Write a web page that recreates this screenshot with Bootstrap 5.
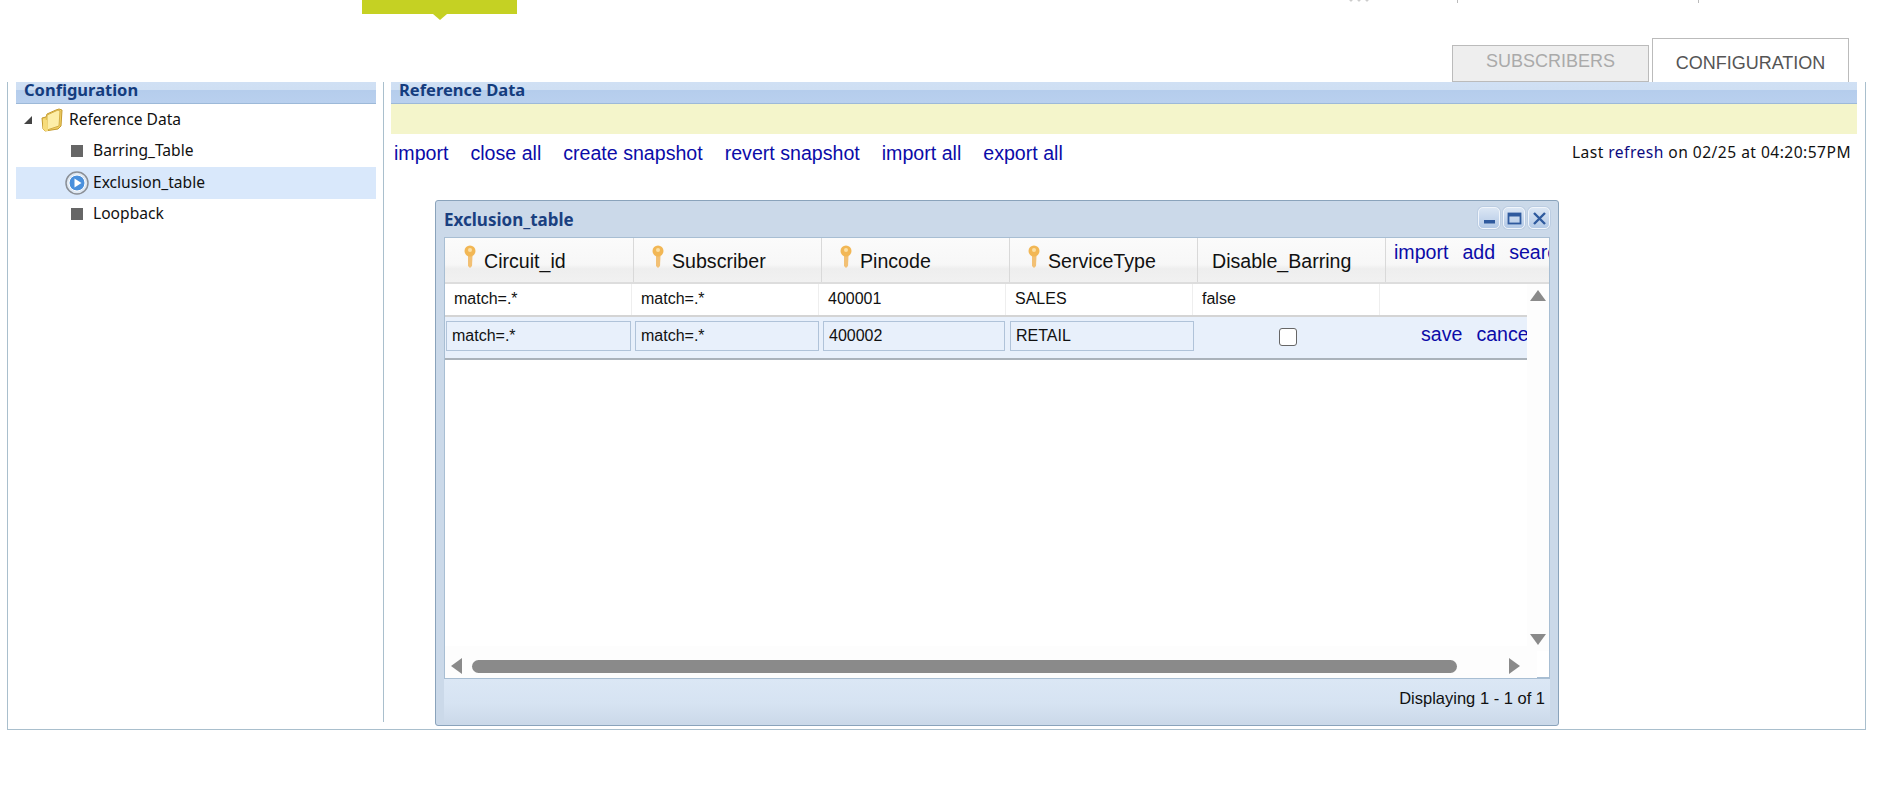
<!DOCTYPE html>
<html lang="en">
<head>
<meta charset="utf-8">
<title>Exclusion_table</title>
<link rel="stylesheet" href="https://cdn.jsdelivr.net/npm/bootstrap@5.3.0/dist/css/bootstrap.min.css">
<style>
html,body{height:789px;overflow:hidden;background:#fff}
body{font-family:"Liberation Sans",Arial,sans-serif;color:#111}
a{text-decoration:none;color:#0b0ba8}
.topzone{height:82px}
.brandtab{position:relative;width:155px;height:14px;margin-left:362px;background:#c5d123}
.brandtab::after{content:"";position:absolute;left:71px;top:14px;border:7px solid transparent;border-top:6px solid #c5d123;border-bottom:0}
.topfrag{position:absolute;top:0;width:1px;height:3px;background:#bbb}
.topfrag.f1{left:1457px}.topfrag.f2{left:1698px}
.topdots{position:absolute;top:0;left:1347px;width:24px;height:2px;background:radial-gradient(circle,#ccc 1px,transparent 2px) 0 -2px/8px 4px}
.tabset{position:absolute;top:38px;right:39px;gap:3px;align-items:flex-end}
.tabitem{font-size:18px;border:1px solid #bbb;border-bottom:0;text-align:center}
.tabitem.off{width:197px;height:37px;line-height:31px;background:#eee;color:#aaa;border-bottom:1px solid #bbb}
.tabitem.on{width:197px;height:44px;line-height:48px;background:#fff;color:#555}
.frame{margin-left:7px;width:1859px;height:648px;border:1px solid #a9bfcd;border-top:0}
.treepane{width:376px;height:640px;padding-left:8px;border-right:1px solid #a9bfcd;flex:none}
.panehead{height:22px;padding-left:8px;font:700 16.5px/16px "Noto Sans",sans-serif;color:#143c7e;background:linear-gradient(#d0e0f4 0,#cfdff3 38%,#b5cdec 40%,#b9d0ee 100%);border-bottom:1px solid #9db9d8}
.treepane .panehead{width:360px}
.treelist{font:15.6px/1 "Noto Sans",sans-serif;color:#111;width:360px}
.treerow{height:31.5px;gap:4px}
.treerow.lvl2{padding-left:55px;gap:10px}
.treerow.sel{background:#d9e8fb;padding-left:49px;gap:4px}
.treerow.first{padding-left:7px;gap:5px}
.treerow.first .me-1{margin-right:2px!important}
.mainpane{padding:0 8px 0 7px;width:1482px}
.noticebar{height:30px;background:#f4f5cb}
.actionrow{height:66px;padding:6px 6px 0 3px}
.actionlinks{gap:22px;font-size:19.6px;line-height:26px}
.refreshinfo{font:15.6px/24px "Noto Sans",sans-serif;color:#111;letter-spacing:.46px}
.refreshinfo a{color:#0b0b80}
.winbox{margin-left:44px;width:1124px;height:526px;background:#cbd9e9;border:1px solid #8aa3bb;border-radius:3px;padding:0 8px}
.wintitle{height:36px;padding-top:1px;font:700 17px/1 "Noto Sans",sans-serif;color:#1a4080}
.wbtns{gap:3px;margin-top:-3px}
.wbtn{width:22px;height:22px;border:1px solid #f0f5fb;border-radius:5px;background:linear-gradient(#dbe6f4,#b3c9e6);box-shadow:0 0 0 1px #bccde2}
.gridbox{width:1106px;height:442px;background:#fff;border:1px solid #a8bed3;border-bottom-width:2px;border-right-width:1px}
.gridhead{height:46px;width:1104px;padding-left:1px;overflow:hidden;background:linear-gradient(#fbfbfb 0,#f7f7f7 60%,#eeeeee 70%,#f1f1f1 100%);border-bottom:2px solid #ddd}
.headcell{width:188px;flex:none;border-right:1px solid #d9d9d9;font-size:19.6px;padding:5px 0 0 17px;height:44px;line-height:36px;gap:7px}
.headcell .keyico{margin-top:2px;flex:none}
.headcell.nokey{padding-left:14px}
.headlinks{gap:14px;font-size:19.6px;line-height:26px;padding:1px 0 0 8px;white-space:nowrap}
.gridmain{height:394px;position:relative}
.gridrows{width:1082px;overflow:hidden}
.datarow{height:33px;font-size:16px;border-bottom:2px solid #d4d4d4;line-height:29px}
.datacell{width:187px;flex:none;padding-left:9px;border-right:1px solid #eee;height:31px}
.editrow{height:43px;background:#e8f0fb;border-bottom:2px solid #aab2ba;padding:4px 0 0 1px;gap:4px}
.cellinput.form-control{width:184px;height:30px;flex:none;padding:0 5px;border:1px solid #b0c3d9;border-radius:0;background:#e8f0fb;font-size:16px;color:#111;line-height:1}
.cellinput.wide.form-control{width:185px}
.cellinput.slim.form-control{width:182px;margin-right:1px}
.cellcheck{width:187px;flex:none;height:30px;padding-top:1px}
.cellcheck .form-check-input{width:18px;height:18px;margin:6px 0 0 -8px;border:1px solid #666;background-color:#fff;border-radius:3px}
.editlinks{gap:14px;font-size:19.6px;line-height:26px;padding-left:32px;white-space:nowrap}
.vtrack{position:absolute;right:0;top:0;width:22px;height:367px;background:#fdfdfd}
.htrack{position:absolute;left:0;bottom:0;width:1092px;height:32px;background:#fdfdfd}
.arrowup,.arrowdn{position:absolute;left:3px;width:0;height:0;border:8px solid transparent}
.arrowup{top:6px;border-bottom:11px solid #8a8a8a;border-top:0}
.arrowdn{top:350px;border-top:11px solid #8a8a8a;border-bottom:0}
.arrowlf,.arrowrt{position:absolute;top:12px;width:0;height:0;border:8px solid transparent}
.arrowlf{left:6px;border-right:11px solid #8a8a8a;border-left:0}
.arrowrt{left:1064px;border-left:11px solid #8a8a8a;border-right:0}
.hthumb{position:absolute;left:27px;top:14px;width:985px;height:13px;border-radius:7px;background:#8a8a8a}
.winfoot{height:45px;padding:0 5px 7px 0;background:linear-gradient(#dbe7f5 0,#d6e3f2 55%,#cbd9e9 100%);font-size:16.5px;color:#111}
</style>
</head>
<body>
<div class="topzone position-relative">
  <div class="brandtab"></div>
  <span class="topdots"></span><span class="topfrag f1"></span><span class="topfrag f2"></span>
  <div class="tabset position-absolute d-flex">
    <div class="tabitem off">SUBSCRIBERS</div>
    <div class="tabitem on">CONFIGURATION</div>
  </div>
</div>
<div class="frame d-flex">
  <div class="treepane">
    <div class="panehead">Configuration</div>
    <div class="treelist">
      <div class="treerow first d-flex align-items-center">
        <svg width="10" height="10" viewBox="0 0 10 10" class="me-1"><path d="M9 1V9H1Z" fill="#444"/></svg>
        <svg width="24" height="24" viewBox="0 0 24 24"><path d="M2 10l4-1 1-3 9-4 3-1 3 1-1 16-3 3L5 23 3 21Z" fill="#f0cf63" stroke="#c49a2e"/><path d="M7 7l11-5 2 1-1 15-12 4Z" fill="#fdeea8" stroke="#d4ae45"/><path d="M3 11l4 1 1 11-3 0-2-2Z" fill="#f7dc7c"/></svg>
        <span>Reference Data</span>
      </div>
      <div class="treerow lvl2 d-flex align-items-center">
        <svg width="12" height="12" viewBox="0 0 12 12"><rect width="12" height="12" fill="#666"/></svg>
        <span>Barring_Table</span>
      </div>
      <div class="treerow sel d-flex align-items-center">
        <svg width="24" height="24" viewBox="0 0 24 24"><circle cx="12" cy="12" r="11" fill="#dfe8f2" stroke="#8a8f96" stroke-width="1.500"/><circle cx="12" cy="12" r="8" fill="#4a90dc" stroke="#fff" stroke-width="1"/><path d="M9.500 7.500l7 4.500-7 4.500Z" fill="#fff"/></svg>
        <span>Exclusion_table</span>
      </div>
      <div class="treerow lvl2 d-flex align-items-center">
        <svg width="12" height="12" viewBox="0 0 12 12"><rect width="12" height="12" fill="#666"/></svg>
        <span>Loopback</span>
      </div>
    </div>
  </div>
  <div class="mainpane">
    <div class="panehead">Reference Data</div>
    <div class="noticebar"></div>
    <div class="actionrow d-flex justify-content-between align-items-start">
      <div class="actionlinks d-flex"><a href="#">import</a><a href="#">close all</a><a href="#">create snapshot</a><a href="#">revert snapshot</a><a href="#">import all</a><a href="#">export all</a></div>
      <div class="refreshinfo">Last <a href="#">refresh</a> on 02/25 at 04:20:57PM</div>
    </div>
    <div class="winbox">
      <div class="wintitle d-flex justify-content-between align-items-center">
        <span>Exclusion_table</span>
        <div class="wbtns d-flex">
          <div class="wbtn d-flex align-items-center justify-content-center"><svg width="15" height="15" viewBox="0 0 15 15"><rect x="2" y="9" width="11" height="3.500" fill="#2f5a9e"/></svg></div>
          <div class="wbtn d-flex align-items-center justify-content-center"><svg width="15" height="15" viewBox="0 0 15 15"><rect x="1.500" y="2.500" width="12" height="10" fill="none" stroke="#2f5a9e" stroke-width="1.800"/><rect x="1" y="2" width="13" height="3.500" fill="#2f5a9e"/></svg></div>
          <div class="wbtn d-flex align-items-center justify-content-center"><svg width="15" height="15" viewBox="0 0 15 15"><path d="M2 2L13 13M13 2L2 13" stroke="#2f5a9e" stroke-width="2.400"/></svg></div>
        </div>
      </div>
      <div class="gridbox">
        <div class="gridhead d-flex">
          <div class="headcell d-flex"><svg class="keyico" width="14" height="24" viewBox="0 0 14 24"><path d="M5 11h4.500l-.5 10-2 2-2-2Z" fill="#f2c074"/><circle cx="7" cy="6" r="5.500" fill="#f2b755"/><circle cx="7" cy="5" r="2" fill="#fbe0a5"/></svg><span>Circuit_id</span></div>
          <div class="headcell d-flex"><svg class="keyico" width="14" height="24" viewBox="0 0 14 24"><path d="M5 11h4.500l-.5 10-2 2-2-2Z" fill="#f2c074"/><circle cx="7" cy="6" r="5.500" fill="#f2b755"/><circle cx="7" cy="5" r="2" fill="#fbe0a5"/></svg><span>Subscriber</span></div>
          <div class="headcell d-flex"><svg class="keyico" width="14" height="24" viewBox="0 0 14 24"><path d="M5 11h4.500l-.5 10-2 2-2-2Z" fill="#f2c074"/><circle cx="7" cy="6" r="5.500" fill="#f2b755"/><circle cx="7" cy="5" r="2" fill="#fbe0a5"/></svg><span>Pincode</span></div>
          <div class="headcell d-flex"><svg class="keyico" width="14" height="24" viewBox="0 0 14 24"><path d="M5 11h4.500l-.5 10-2 2-2-2Z" fill="#f2c074"/><circle cx="7" cy="6" r="5.500" fill="#f2b755"/><circle cx="7" cy="5" r="2" fill="#fbe0a5"/></svg><span>ServiceType</span></div>
          <div class="headcell nokey d-flex"><span>Disable_Barring</span></div>
          <div class="headlinks d-flex"><a href="#">import</a><a href="#">add</a><a href="#">search</a></div>
        </div>
        <div class="gridmain">
          <div class="gridrows">
            <div class="datarow d-flex">
              <div class="datacell">match=.*</div><div class="datacell">match=.*</div><div class="datacell">400001</div><div class="datacell">SALES</div><div class="datacell">false</div>
            </div>
            <div class="editrow d-flex">
              <input class="form-control cellinput wide" value="match=.*" aria-label="Circuit_id">
              <input class="form-control cellinput" value="match=.*" aria-label="Subscriber">
              <input class="form-control cellinput slim" value="400002" aria-label="Pincode">
              <input class="form-control cellinput" value="RETAIL" aria-label="ServiceType">
              <div class="cellcheck d-flex justify-content-center"><input class="form-check-input" type="checkbox" aria-label="Disable_Barring"></div>
              <div class="editlinks d-flex"><a href="#">save</a><a href="#">cancel</a></div>
            </div>
          </div>
          <div class="vtrack"><span class="arrowup"></span><span class="arrowdn"></span></div>
          <div class="htrack"><span class="arrowlf"></span><span class="hthumb"></span><span class="arrowrt"></span></div>
        </div>
      </div>
      <div class="winfoot d-flex justify-content-end align-items-center">Displaying 1 - 1 of 1</div>
    </div>
  </div>
</div>
</body>
</html>
